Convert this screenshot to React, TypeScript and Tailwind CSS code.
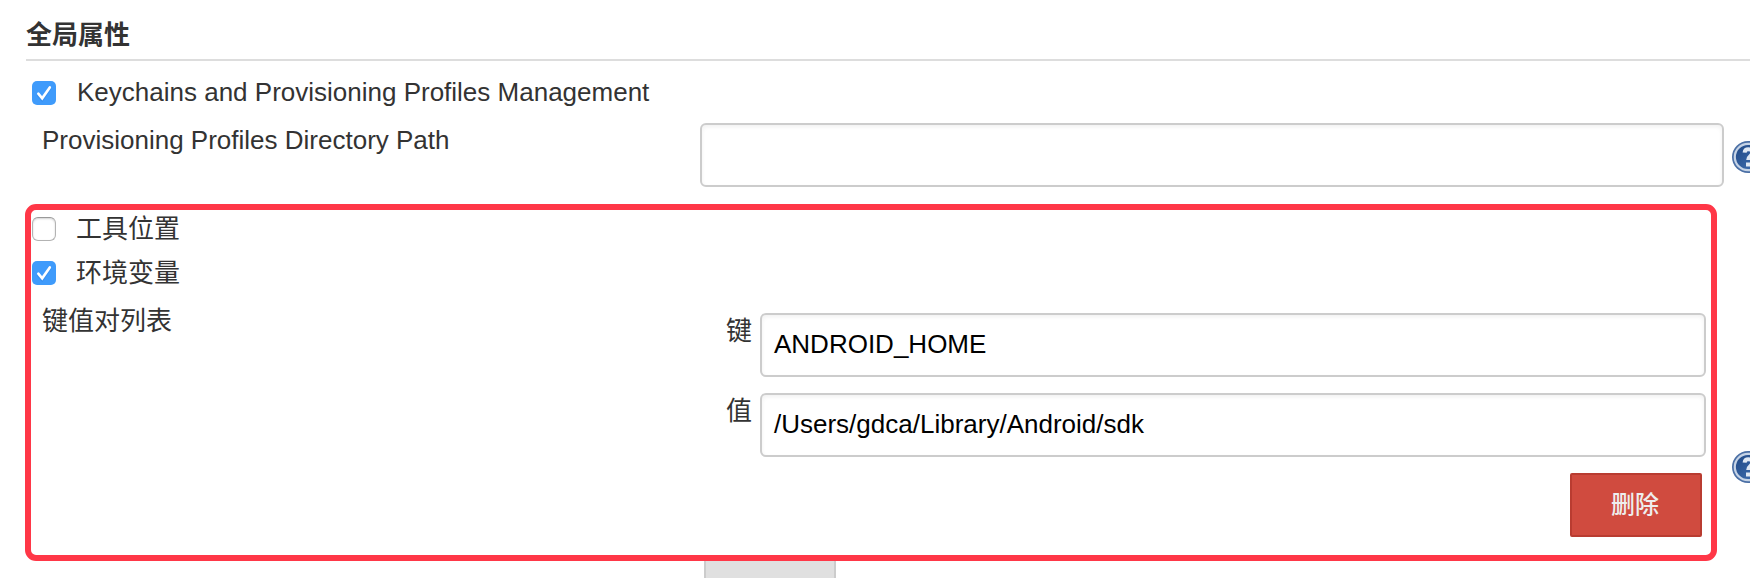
import type { ReactNode } from 'react';

function Checkbox({ checked = false }: { checked?: boolean }) {
  return (
    <span
      role="checkbox"
      aria-checked={checked}
      className={
        checked
          ? 'block h-6 w-6 shrink-0 rounded-[5px] bg-[#3f9bfb]'
          : 'block h-6 w-6 shrink-0 rounded-[6px] border border-[#b3b3b3] border-t-[#999] bg-white shadow-[inset_0_1px_2px_rgba(0,0,0,0.18)]'
      }
    >
      {checked && (
        <svg viewBox="0 0 24 24" className="h-6 w-6" fill="none">
          <path d="M6.3 14.4 10.2 18.8 17.8 7.6" stroke="#2b7fe0" strokeOpacity="0.35" strokeWidth="3" strokeLinecap="round" />
          <path d="M6.3 12.7 10.2 17.3 17.8 6.4" stroke="#fff" strokeWidth="2.6" strokeLinecap="round" />
        </svg>
      )}
    </span>
  );
}

function OptionRow({ checked, children }: { checked?: boolean; children: ReactNode }) {
  return (
    <label className="flex h-6 items-start gap-5 pl-8">
      <Checkbox checked={checked} />
      {children}
    </label>
  );
}

function Field({ value = '' }: { value?: string }) {
  return (
    <div className="flex h-16 flex-1 items-center rounded-[6px] border-2 border-[#ccc] bg-white px-3 text-black shadow-[inset_0_2px_4px_rgba(0,0,0,0.06)]">
      <span className="-mt-0.5">{value}</span>
    </div>
  );
}

function HelpIcon() {
  return (
    <svg viewBox="0 0 32 32" className="h-8 w-8 shrink-0" fill="none">
      <defs>
        <linearGradient id="help" x1="0" y1="0" x2="1" y2="1">
          <stop offset="0" stopColor="#1d4785" />
          <stop offset="1" stopColor="#4573b3" />
        </linearGradient>
      </defs>
      <circle cx="16" cy="16" r="16" fill="#4a6fa5" />
      <circle cx="16" cy="16" r="13.2" fill="url(#help)" stroke="#c5d3e6" strokeWidth="2.2" />
      <path d="M12.6 11.6c.2-2.6 1.9-3.3 3.8-3.3 2.5 0 4.2 1.2 4.2 3.3 0 3.1-4.4 3.4-4.4 7.4" stroke="#dfe8f3" strokeWidth="4" />
      <rect x="14" y="21.5" width="4.4" height="4" fill="#dfe8f3" />
    </svg>
  );
}

export default function App() {
  return (
    <main className="relative flex h-[578px] w-full flex-col overflow-hidden bg-white font-['Liberation_Sans','Noto_Sans_CJK_SC',sans-serif] text-[26px] leading-[30px] text-[#333]">
      <h2 className="ml-[26px] h-[61px] shrink-0 border-b-2 border-[#ddd] pt-5 font-bold">全局属性</h2>

      <div className="mt-5 shrink-0">
        <OptionRow checked>
          <span className="-mt-1 ml-px whitespace-nowrap">Keychains and Provisioning Profiles Management</span>
        </OptionRow>
      </div>
      <div className="mt-[18px] flex h-16 shrink-0">
        <div className="w-[700px] shrink-0 pl-[42px] pt-[2px]">Provisioning Profiles Directory Path</div>
        <div className="flex w-[1024px] shrink-0">
          <Field />
        </div>
        <div className="ml-2 pt-[18px]">
          <HelpIcon />
        </div>
      </div>

      <div className="mt-[30px] flex shrink-0 flex-col gap-5">
        <OptionRow>
          <span className="-mt-[3px]">工具位置</span>
        </OptionRow>
        <OptionRow checked>
          <span className="-mt-[3px]">环境变量</span>
        </OptionRow>
      </div>

      <section className="mt-7 flex h-[224px] shrink-0">
        <div className="w-[726px] shrink-0 pl-[42px]">
          <div className="-mt-[7px]">键值对列表</div>
        </div>
        <div className="flex w-[980px] shrink-0 flex-col gap-4">
          <div className="flex">
            <div className="w-[34px] shrink-0 pt-[3px]">键</div>
            <Field value="ANDROID_HOME" />
          </div>
          <div className="flex">
            <div className="w-[34px] shrink-0 pt-[3px]">值</div>
            <Field value="/Users/gdca/Library/Android/sdk" />
          </div>
          <button className="mr-1 h-16 w-[132px] shrink-0 self-end rounded-[2px] border-2 border-[#b93c31] bg-[#d04b3f] pr-0.5 text-[24px] font-medium text-[#eee]">
            删除
          </button>
        </div>
        <div className="ml-[26px] pt-[138px]">
          <HelpIcon />
        </div>
      </section>

      <div className="ml-[704px] mt-5 h-16 w-[132px] shrink-0 border-2 border-[#ccc] bg-[#e0e0e0]" />

      <div className="pointer-events-none absolute left-[25px] top-[204px] h-[357px] w-[1692px] rounded-[11px] border-[6px] border-[#ff3747]" />
    </main>
  );
}
